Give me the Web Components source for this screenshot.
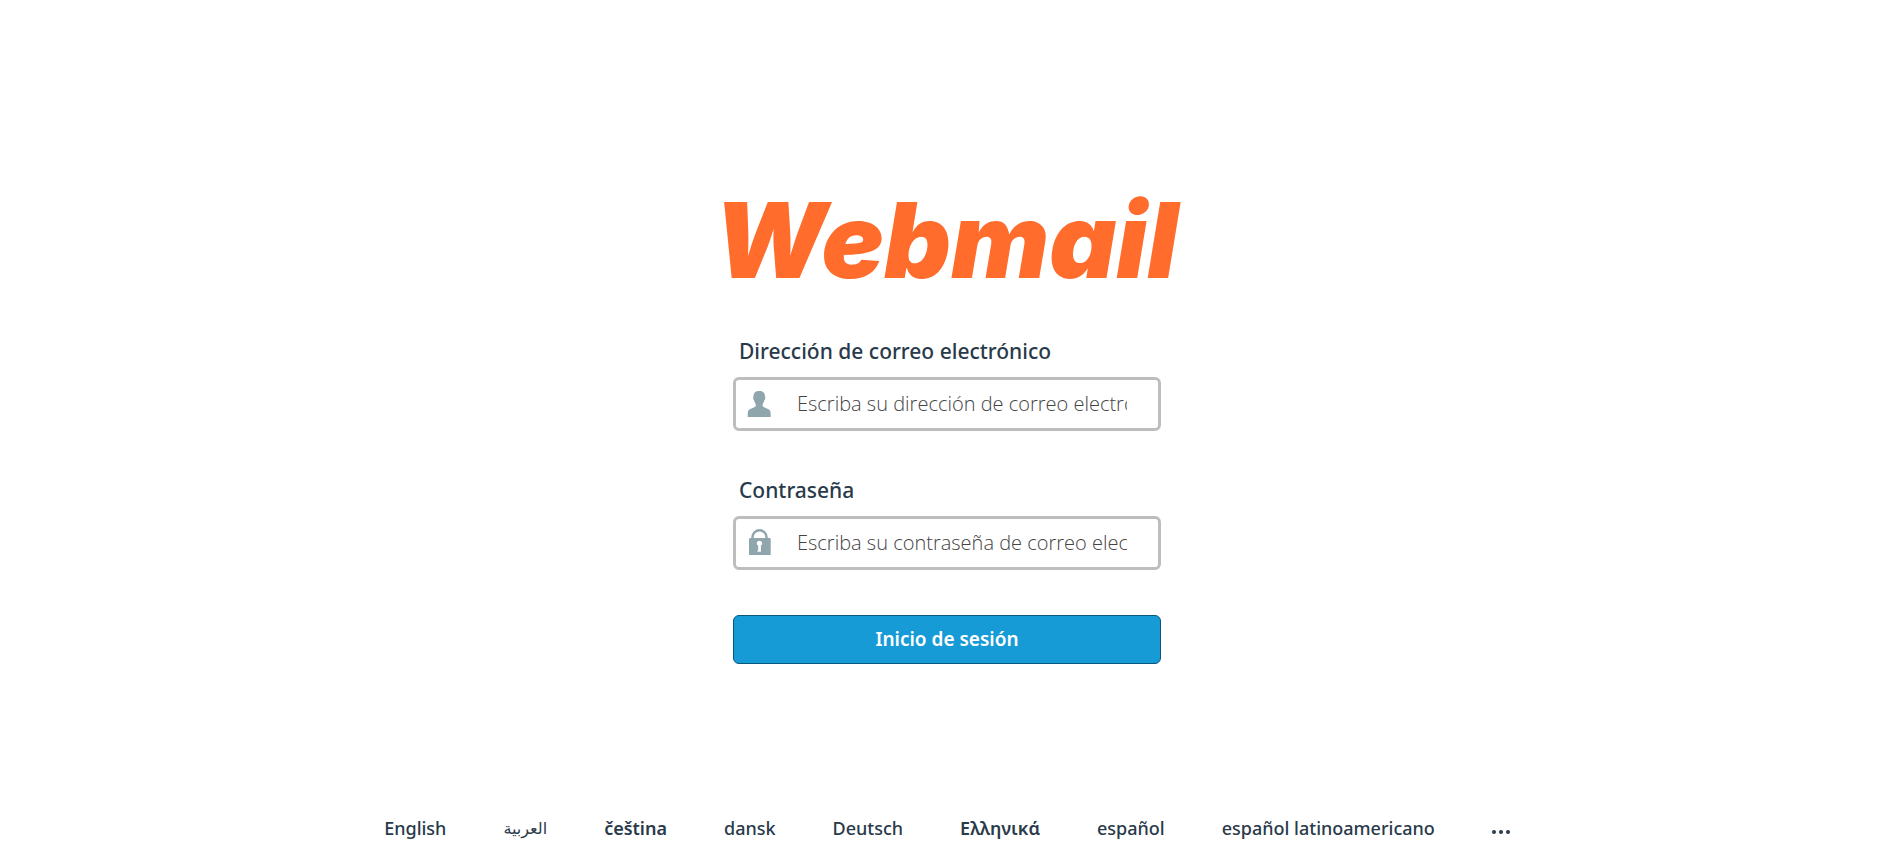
<!DOCTYPE html>
<html lang="es">
<head>
<meta charset="utf-8">
<title>Webmail</title>
<style>
  body { margin: 0; background: #fff; color: #293a4a; font-family: "Open Sans", "Noto Sans", sans-serif; }
</style>
</head>
<body>
<webmail-page>
  <webmail-logo slot="logo"></webmail-logo>
  <login-form></login-form>
  <locale-list slot="footer"></locale-list>
</webmail-page>
<script>
function define(name, html) {
  const template = document.createElement('template');
  template.innerHTML = html;
  customElements.define(name, class extends HTMLElement {
    constructor() {
      super();
      this.attachShadow({ mode: 'open' }).append(template.content.cloneNode(true));
    }
    connectedCallback() {
      const control = this.shadowRoot.querySelector('input');
      if (!control) return;
      this.shadowRoot.querySelector('label').textContent = this.getAttribute('label');
      control.type = this.getAttribute('type');
      control.placeholder = this.getAttribute('placeholder');
    }
  });
}

define('webmail-page', `
  <style>
    :host { display: flex; flex-direction: column; align-items: center; box-sizing: border-box; min-height: 100vh; padding: 192px 0 8px 7px; }
    main { display: flex; flex-direction: column; align-items: center; }
    footer { margin-top: 147px; }
  </style>
  <main><slot name="logo"></slot><slot></slot></main>
  <footer><slot name="footer"></slot></footer>`);

define('webmail-logo', `
  <style>
    :host { display: block; width: 456px; height: 96px; padding-right: 10px; }
    svg { display: block; overflow: visible; }
    text { font: italic 900 104px Inter, "Open Sans", sans-serif; fill: #ff6c2c; }
  </style>
  <svg width="456" height="96" viewBox="0 0 456 96"><text x="0" y="86">Webmail</text></svg>`);

define('login-field', `
  <style>
    :host { display: block; }
    label { display: block; padding-left: 6px; font: 500 21px/28px "Noto Sans", sans-serif; }
    .box { display: flex; align-items: center; box-sizing: border-box; height: 54px; margin-top: 12px; padding: 0 31px 0 11px; border: 3px solid #bdbdbd; border-radius: 6px; }
    ::slotted(svg) { flex: none; width: 24px; height: 28px; margin-right: 26px; }
    input { flex: 1; min-width: 0; padding: 0; border: 0; outline: 0; background: none; color: inherit; font: 300 20px/28px "Open Sans", sans-serif; }
    input::placeholder { color: #444; }
  </style>
  <label for="control"></label>
  <div class="box"><slot></slot><input id="control"></div>`);

define('login-form', `
  <style>
    :host { display: block; width: 428px; margin-top: 49px; }
    form { display: flex; flex-direction: column; gap: 45px; }
    button { height: 49px; padding: 0 0 2px; border: 1px solid #095779; border-radius: 6px; background: #179bd7; color: #fff; font: 600 19px/24px "Noto Sans", sans-serif; }
  </style>
  <form>
    <login-field label="Dirección de correo electrónico" type="email" placeholder="Escriba su dirección de correo electrónico.">
      <svg viewBox="0 -1 24 28" fill="#8fa6ac" aria-hidden="true"><path d="M12.200 0C16 0 18 1.800 18 5.500c.6.500.4 3-.7 3.800-.3 1.700-.9 2.700-1.600 3.700v2.200c1.200 1.800 6.100 2 7.300 4.300.7 1.300.7 2.800.7 6.500H.7c0-3.700 0-5.200.7-6.500 1.200-2.300 6.100-2.500 7.300-4.300V13c-.7-1-1.300-2-1.600-3.700C6 8.500 5.900 6 6.500 5.500 6.500 1.800 8.500 0 12.200 0z"/></svg>
    </login-field>
    <login-field label="Contraseña" type="password" placeholder="Escriba su contraseña de correo electrónico.">
      <svg viewBox="0 0 24 28" aria-hidden="true"><path d="M5.500 10V8a7 6.700 0 0 1 14 0v2" fill="none" stroke="#8fa6ac" stroke-width="2.400"/><path d="M3 9h20l.7 1v16H2V10z" fill="#8fa6ac"/><path d="M12.400 11.700a2.700 2.700 0 0 1 1.500 5v6h-3.500v-1.200h.8v-4.700a2.700 2.700 0 0 1 1.200-5.100z" fill="#fff"/></svg>
    </login-field>
    <button type="submit">Inicio de sesión</button>
  </form>`);

define('locale-list', `
  <style>
    :host { display: block; }
    ul { display: flex; align-items: center; flex-wrap: wrap; gap: 0 57px; margin: 0; padding: 0; list-style: none; font: 500 18px/32px "Noto Sans", sans-serif; }
    a { color: inherit; text-decoration: none; }
    .more { display: flex; gap: 3px; padding-top: 8px; }
    .more i { width: 4px; height: 4px; border-radius: 50%; background: #293a4a; }
    .ar { font-family: "DejaVu Sans", sans-serif; font-size: 16px; }
    .strong { font-weight: 600; }
  </style>
  <ul>
    <li><a href="#en">English</a></li>
    <li><a class="ar" href="#ar" lang="ar">العربية</a></li>
    <li><a class="strong" href="#cs">čeština</a></li>
    <li><a href="#da">dansk</a></li>
    <li><a href="#de">Deutsch</a></li>
    <li><a class="strong" href="#el">Ελληνικά</a></li>
    <li><a href="#es">español</a></li>
    <li><a href="#es_419">español latinoamericano</a></li>
    <li><a class="more" href="#locales" aria-label="Más idiomas"><i></i><i></i><i></i></a></li>
  </ul>`);
</script>
</body>
</html>
